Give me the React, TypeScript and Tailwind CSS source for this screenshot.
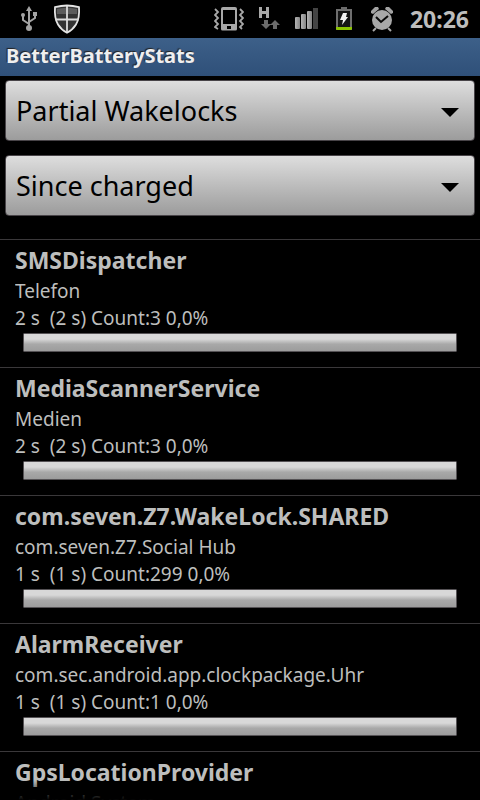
import { useState } from "react";

interface Wakelock {
  name: string;
  source: string;
  stats: string;
}

const STAT_TYPES = ["Partial Wakelocks", "Kernel Wakelocks", "Process", "Network"];
const REFERENCES = ["Since charged", "Since unplugged", "Custom"];

const WAKELOCKS: Wakelock[] = [
  { name: "SMSDispatcher", source: "Telefon", stats: "2 s  (2 s) Count:3 0,0%" },
  { name: "MediaScannerService", source: "Medien", stats: "2 s  (2 s) Count:3 0,0%" },
  {
    name: "com.seven.Z7.WakeLock.SHARED",
    source: "com.seven.Z7.Social Hub",
    stats: "1 s  (1 s) Count:299 0,0%",
  },
  {
    name: "AlarmReceiver",
    source: "com.sec.android.app.clockpackage.Uhr",
    stats: "1 s  (1 s) Count:1 0,0%",
  },
  { name: "GpsLocationProvider", source: "Android System", stats: "1 s  (1 s) Count:2 0,0%" },
];

function UsbIcon() {
  return (
    <svg width="18" height="28" viewBox="0 0 18 28" fill="none" aria-label="USB connected">
      <path d="M9 5v18M9 19l-6-4v-4M9 17l6-4V9" stroke="#a3a3a3" strokeWidth="2" />
      <path d="M9 1l3 5H6z" fill="#a3a3a3" />
      <circle cx="9" cy="23" r="3" fill="#a3a3a3" />
      <circle cx="3" cy="10" r="2" fill="#a3a3a3" />
      <path d="M13 7h4v4h-4z" fill="#a3a3a3" />
    </svg>
  );
}

function ShieldIcon() {
  return (
    <svg width="28" height="30" viewBox="0 0 28 30" aria-label="Protected">
      <path
        d="M14 1.500c4 0 8 .6 12 1.700.5 6.500-.2 12.500-3 17.300-2.200 3.600-5.200 6.300-9 8.300-3.800-2-6.800-4.700-9-8.300C2.200 15.700 1.500 9.700 2 3.200c4-1.100 8-1.700 12-1.700z"
        fill="#333"
        stroke="#e4e4e4"
        strokeWidth="1.800"
      />
      <path d="M4 5c3-.8 6-1.200 9-1.300V10H4zM15 3.700c3 .1 6 .5 9 1.300v5h-9z" fill="#5c5c5c" />
      <path d="M14 2v26M2.500 15.500h23" stroke="#dcdcdc" strokeWidth="1.800" />
    </svg>
  );
}

function VibrateIcon() {
  return (
    <svg width="30" height="24" viewBox="0 0 30 24" fill="none" aria-label="Vibrate">
      <path
        fillRule="evenodd"
        d="M9 0h12a2 2 0 0 1 2 2v20a1.500 1.500 0 0 1-1.500 1.500h-13A1.500 1.500 0 0 1 7 22V2a2 2 0 0 1 2-2zM9 3v14h12V3zM13 19v3h4v-3z"
        fill="#a8a8a8"
      />
      <path
        d="M1 2l3 3-3 3 3 3-3 3 3 3-3 3 3 2M26 2l3 3-3 3 3 3-3 3 3 3-3 3 2 2"
        stroke="#a8a8a8"
        strokeWidth="1.800"
      />
    </svg>
  );
}

function DataIcon() {
  return (
    <svg width="22" height="24" viewBox="0 0 22 24" aria-label="HSDPA">
      <path d="M0 0h3v4h4V0h3v11H7V7H3v4H0z" fill="#a8a8a8" />
      <path d="M5 13h4v4h3l-5 5-5-5h3zM14 22h4v-4h3l-5-5-5 5h3z" fill="#6b6b6b" />
    </svg>
  );
}

function SignalIcon() {
  return (
    <svg width="24" height="22" viewBox="0 0 24 22" aria-label="Signal strength">
      <defs>
        <linearGradient id="bar" x1="0" x2="1">
          <stop offset="0" stopColor="#b4b4b4" />
          <stop offset="1" stopColor="#858585" />
        </linearGradient>
      </defs>
      <rect x="1" y="9" width="5" height="12" rx="1" fill="url(#bar)" />
      <rect x="7" y="6" width="5" height="15" rx="1" fill="url(#bar)" />
      <rect x="13" y="3" width="5" height="18" rx="1" fill="url(#bar)" />
      <rect x="19" y="0" width="5" height="21" fill="#444" />
    </svg>
  );
}

function BatteryIcon() {
  return (
    <svg width="16" height="24" viewBox="0 0 16 24" aria-label="Battery charging">
      <path d="M5 0h6v3H5z" fill="#6b6b6b" />
      <path d="M1 3h14v19H1z" fill="#141414" stroke="#6e6e6e" strokeWidth="2" />
      <path d="M0 20h16v2l-1 1H1l-1-1z" fill="#8bc400" />
      <path d="M7 6h4l-1 4h2L6 18l1-5H4z" fill="#f4f4f4" />
    </svg>
  );
}

function AlarmIcon() {
  return (
    <svg width="22" height="25" viewBox="0 0 22 25" fill="none" aria-label="Alarm set">
      <path d="M0 6V4l4-4h3l1 2-6 5zM22 6V4l-4-4h-3l-1 2 6 5z" fill="#a3a3a3" />
      <circle cx="11" cy="13" r="10" fill="#a8a8a8" />
      <path d="M5 21l-3 3M17 21l3 3" stroke="#a8a8a8" strokeWidth="2" />
      <path d="M5 10l5 5 7-6" stroke="#080808" strokeWidth="2" />
    </svg>
  );
}

function StatusBar() {
  return (
    <header className="flex h-[38px] shrink-0 items-center justify-between pr-[11px] pl-5">
      <div className="flex items-center gap-[15px]">
        <UsbIcon />
        <ShieldIcon />
      </div>
      <div className="flex items-center">
        <VibrateIcon />
        <span className="ml-[15px]">
          <DataIcon />
        </span>
        <span className="ml-[13px]">
          <SignalIcon />
        </span>
        <span className="ml-[18px]">
          <BatteryIcon />
        </span>
        <span className="ml-[19px]">
          <AlarmIcon />
        </span>
        <time className="ml-[17px] text-[23px] font-bold text-[#bdbdbd]">20:26</time>
      </div>
    </header>
  );
}

function Spinner({
  label,
  options,
  value,
  onChange,
}: {
  label: string;
  options: string[];
  value: string;
  onChange: (value: string) => void;
}) {
  return (
    <div className="relative">
      <select
        aria-label={label}
        value={value}
        onChange={(e) => onChange(e.target.value)}
        className="block h-[61px] w-full appearance-none rounded-sm border border-[#484448] bg-linear-to-b from-[#dedede] to-[#9c9c9c] pt-[2px] pr-12 pl-[10px] text-[27px] text-black"
      >
        {options.map((option) => (
          <option key={option}>{option}</option>
        ))}
      </select>
      <svg
        width="18"
        height="9"
        viewBox="0 0 18 9"
        className="pointer-events-none absolute top-7 right-4"
      >
        <path d="M0 0h18L9 9z" fill="#000" />
      </svg>
    </div>
  );
}

function WakelockRow({ item }: { item: Wakelock }) {
  return (
    <li className="border-t border-[#3a383a] px-[15px] pt-1 pb-[15px] text-[#bdbebd]">
      <h2 className="mb-[2px] truncate text-[23px] leading-8 font-bold">{item.name}</h2>
      <p className="truncate text-[19px] leading-[27px]">{item.source}</p>
      <p className="text-[19px] leading-[27px] whitespace-pre">{item.stats}</p>
      <div
        role="img"
        aria-label={`${item.name} share`}
        className="mx-2 mt-px h-[19px] rounded-[1px] border border-[#555255] bg-linear-to-b from-[#d8d8d8] from-30% via-[#a8a8a8] via-60% to-[#9c9c9c]"
      />
    </li>
  );
}

export default function App() {
  const [statType, setStatType] = useState(STAT_TYPES[0]);
  const [reference, setReference] = useState(REFERENCES[0]);

  return (
    <div className="flex h-screen flex-col overflow-hidden bg-black font-['Noto_Sans',sans-serif]">
      <StatusBar />
      <h1 className="h-[38px] shrink-0 bg-linear-to-b from-[#3d6089] to-[#2f5079] px-[6px] text-xl leading-9 font-bold text-[#efefef] [text-shadow:-1px_-1px_1px_#222]">
        BetterBatteryStats
      </h1>
      <div className="flex shrink-0 flex-col gap-[14px] px-[5px] pt-1 pb-[23px]">
        <Spinner label="Statistic" options={STAT_TYPES} value={statType} onChange={setStatType} />
        <Spinner label="Reference" options={REFERENCES} value={reference} onChange={setReference} />
      </div>
      <main className="relative min-h-0 flex-1 overflow-hidden">
        <ul>
          {WAKELOCKS.map((item) => (
            <WakelockRow key={item.name} item={item} />
          ))}
        </ul>
        <div className="pointer-events-none absolute inset-x-0 bottom-0 h-5 bg-linear-to-t from-black to-transparent" />
      </main>
    </div>
  );
}
